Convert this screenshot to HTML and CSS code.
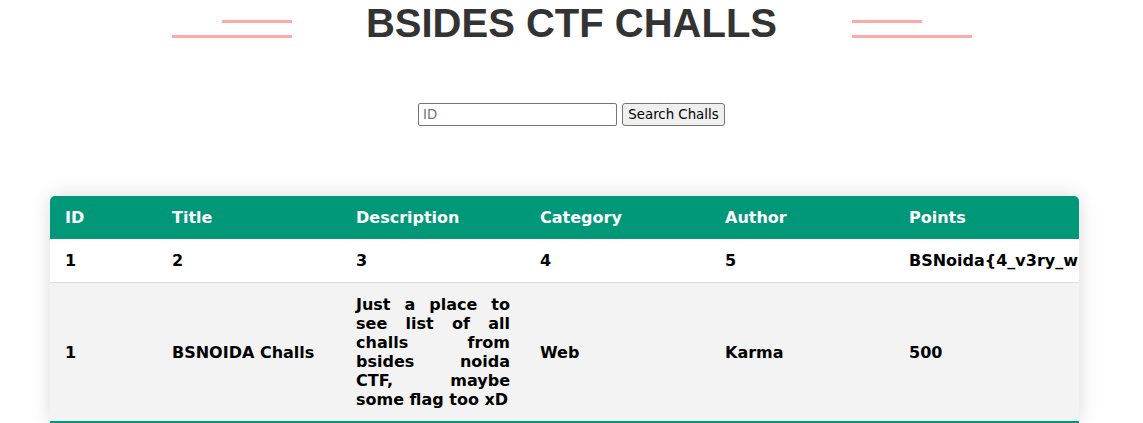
FILE: index.html
```html
<!DOCTYPE html>
<html>
<head>
<meta charset="utf-8">
<title>BSIDES CTF CHALLS</title>
<link rel="stylesheet" href="styles.css">
</head>
<body>
<header class="banner">
  <div class="deco deco-left"><span class="line short"></span><span class="line long"></span></div>
  <h1 class="title">BSIDES CTF CHALLS</h1>
  <div class="deco deco-right"><span class="line short"></span><span class="line long"></span></div>
</header>
<form class="search">
  <input class="search-input" type="text" placeholder="ID">
  <button class="search-btn" type="button">Search Challs</button>
</form>
<div class="table-wrap">
  <table class="styled-table">
    <colgroup><col class="col-id"><col class="col-a"><col class="col-a"><col class="col-b"><col class="col-a"><col class="col-b"></colgroup>
    <thead>
      <tr><th>ID</th><th>Title</th><th>Description</th><th>Category</th><th>Author</th><th>Points</th></tr>
    </thead>
    <tbody>
      <tr><td>1</td><td>2</td><td>3</td><td>4</td><td>5</td><td class="nowrap">BSNoida{4_v3ry_w34k_sql1_ch4ll}</td></tr>
      <tr><td>1</td><td>BSNOIDA Challs</td><td class="desc">Just a place to see list of all challs from bsides noida CTF, maybe some flag too xD</td><td>Web</td><td>Karma</td><td>500</td></tr>
    </tbody>
  </table>
</div>
</body>
</html>
```
FILE: styles.css
```css
html, body {
  margin: 0;
  padding: 0;
  background: #fff;
}
body {
  font-family: "DejaVu Sans", sans-serif;
}
.banner {
  display: flex;
  justify-content: center;
  align-items: flex-start;
  height: 46px;
  padding-left: 1px;
}
.title {
  margin: 0 75px 0 74px;
  font-family: "Liberation Sans", Arial, sans-serif;
  font-size: 40px;
  font-weight: bold;
  line-height: 46px;
  color: #333;
  white-space: nowrap;
}
.deco {
  width: 120px;
  display: flex;
  flex-direction: column;
  padding-top: 20px;
  gap: 12px;
}
.deco-left { align-items: flex-end; }
.deco-right { align-items: flex-start; }
.line {
  display: block;
  height: 3px;
  background: #ffa9a9;
}
.line.short { width: 70px; }
.line.long { width: 120px; }

.search {
  display: flex;
  justify-content: center;
  gap: 5px;
  margin: 57px 0 0 0;
}
.search-input {
  box-sizing: border-box;
  width: 199px;
  height: 23px;
  margin: 0;
  padding: 1px 4px;
  border: 1px solid #767676;
  border-radius: 2px;
  font-family: "DejaVu Sans", sans-serif;
  font-size: 13.333px;
  color: #000;
}
.search-input::placeholder { color: #757575; }
.search-btn {
  box-sizing: border-box;
  width: 103px;
  height: 23px;
  margin: 0;
  padding: 0;
  border: 1px solid #767676;
  border-radius: 3px;
  background: #efefef;
  font-family: "DejaVu Sans", sans-serif;
  font-size: 13.333px;
  white-space: nowrap;
  color: #000;
}

.table-wrap {
  width: 1029px;
  margin: 70px 0 0 50px;
  border-radius: 5px 5px 0 0;
  overflow: hidden;
  box-shadow: 0 0 20px rgba(0, 0, 0, 0.15);
}
.styled-table {
  width: 1029px;
  table-layout: fixed;
  border-collapse: collapse;
  font-size: 16px;
  font-weight: bold;
  line-height: 19px;
}
.col-id { width: 107px; }
.col-a { width: 184px; }
.col-b { width: 185px; }
.styled-table thead tr {
  background: #009879;
  color: #fff;
  text-align: left;
}
.styled-table th,
.styled-table td {
  padding: 12px 15px;
  text-align: left;
  vertical-align: middle;
}
.styled-table td { color: #000; }
.styled-table tbody tr {
  border-bottom: 1px solid #dddddd;
}
.styled-table tbody tr:nth-of-type(even) {
  background: #f3f3f3;
}
.styled-table tbody tr:last-of-type {
  border-bottom: 2px solid #009879;
}
.nowrap { white-space: nowrap; }
.styled-table td.desc { text-align: justify; }
```
